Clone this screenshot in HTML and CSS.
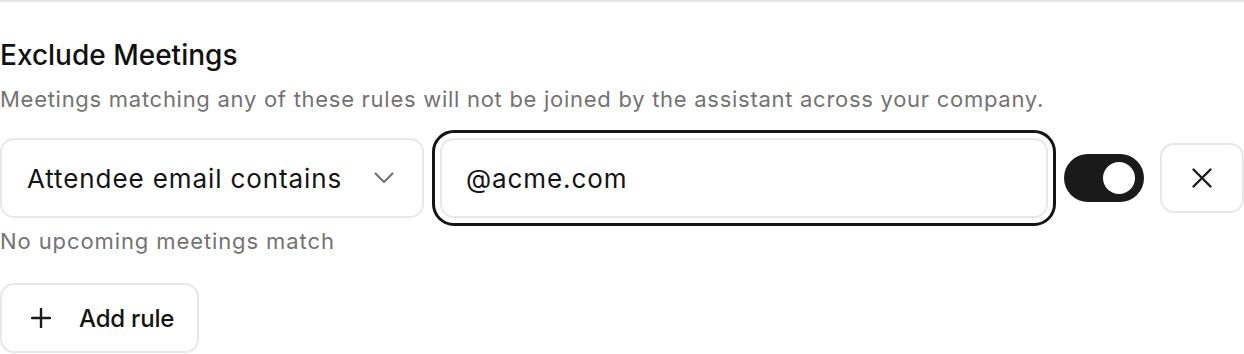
FILE: index.html
```html
<!DOCTYPE html>
<html lang="en">
<head>
<meta charset="utf-8">
<title>Exclude Meetings</title>
<link rel="stylesheet" href="styles.css">
</head>
<body>
<section class="section">
  <h2 class="title">Exclude Meetings</h2>
  <p class="desc">Meetings matching any of these rules will not be joined by the assistant across your company.</p>
  <div class="rule">
    <div class="rule-row">
      <button class="select" type="button">
        <span class="select-label">Attendee email contains</span>
        <svg class="chevron" width="20" height="12" viewBox="0 0 20 12" aria-hidden="true"><path d="M1.5 1.5L10 10l8.5-8.5" fill="none" stroke="#707070" stroke-width="2" stroke-linecap="round" stroke-linejoin="round"/></svg>
      </button>
      <div class="input is-focused">@acme.com</div>
      <span class="toggle is-on" role="switch" aria-checked="true"><span class="knob"></span></span>
      <button class="icon-btn" type="button" aria-label="Remove rule">
        <svg width="22" height="22" viewBox="0 0 22 22" aria-hidden="true"><path d="M2.5 2.5l17 17M19.5 2.5l-17 17" fill="none" stroke="#1a1a1a" stroke-width="2.4" stroke-linecap="round"/></svg>
      </button>
    </div>
    <p class="hint">No upcoming meetings match</p>
  </div>
  <button class="add-btn" type="button">
    <svg width="20" height="20" viewBox="0 0 20 20" aria-hidden="true"><path d="M10 1v18M1 10h18" fill="none" stroke="#1a1a1a" stroke-width="2.4" stroke-linecap="round"/></svg>
    <span class="add-label">Add rule</span>
  </button>
</section>
</body>
</html>
```

FILE: styles.css
```css
* { box-sizing: border-box; }
html, body { margin: 0; padding: 0; background: #fff; }
body {
  font-family: Inter, "Noto Sans", "Liberation Sans", sans-serif;
  color: #141414;
  width: 1244px;
  height: 354px;
  overflow: hidden;
}
.section {
  border-top: 2px solid #e6e6e6;
  display: flex;
  flex-direction: column;
  align-items: flex-start;
  padding-top: 36px;
}
.title {
  margin: 0;
  font-size: 28px;
  line-height: 34px;
  font-weight: 500;
  letter-spacing: 0;
  color: #111;
}
.desc {
  margin: 12px 0 0;
  font-size: 22px;
  line-height: 30px;
  letter-spacing: 0.72px;
  color: #737373;
  white-space: nowrap;
}
.rule {
  margin-top: 16px;
  width: 100%;
  display: flex;
  flex-direction: column;
}
.rule-row {
  display: flex;
  align-items: center;
  gap: 16px;
  height: 96px;
}
.select {
  width: 424px;
  height: 80px;
  flex: none;
  display: flex;
  align-items: center;
  justify-content: space-between;
  padding: 0 28px 0 25px;
  border: 2px solid #e8e8e8;
  border-radius: 14px;
  background: #fff;
  font: inherit;
  font-size: 26px;
  letter-spacing: 0.9px;
  color: #141414;
  white-space: nowrap;
}
.chevron { flex: none; }
.input {
  flex: 1;
  height: 80px;
  display: flex;
  align-items: center;
  padding: 0 24px;
  border: 2px solid #e8e8e8;
  border-radius: 14px;
  font-size: 26px;
  letter-spacing: 0.9px;
  color: #141414;
}
.input.is-focused {
  outline: 3px solid #141414;
  outline-offset: 5px;
}
.toggle {
  flex: none;
  width: 80px;
  height: 48px;
  border-radius: 24px;
  background: #1a1a1a;
  display: flex;
  align-items: center;
  justify-content: flex-end;
  padding: 0 9px;
}
.knob {
  width: 32px;
  height: 32px;
  border-radius: 50%;
  background: #fff;
}
.icon-btn {
  flex: none;
  width: 84px;
  height: 70px;
  border: 2px solid #e8e8e8;
  border-radius: 14px;
  background: #fff;
  display: flex;
  align-items: center;
  justify-content: center;
  padding: 0;
}
.hint {
  margin: 0;
  font-size: 22px;
  line-height: 30px;
  letter-spacing: 0.9px;
  color: #737373;
  white-space: nowrap;
}
.add-btn {
  margin-top: 27px;
  height: 70px;
  width: 199px;
  display: flex;
  align-items: center;
  gap: 28px;
  padding: 0 0 0 29px;
  border: 2px solid #e8e8e8;
  border-radius: 14px;
  background: #fff;
  font: inherit;
  font-size: 24px;
  font-weight: 500;
  letter-spacing: -0.2px;
  color: #141414;
  white-space: nowrap;
}
.add-btn svg { flex: none; }
```
